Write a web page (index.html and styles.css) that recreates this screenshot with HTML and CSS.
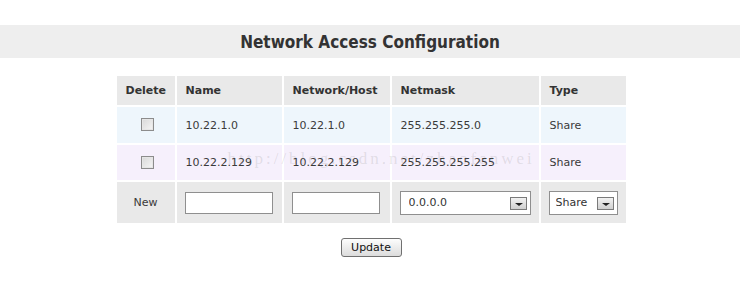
FILE: index.html
```html
<!DOCTYPE html>
<html lang="en">
<head>
    <meta charset="UTF-8">
    <title>Network Access Configuration</title>
    <link rel="stylesheet" href="styles.css">
</head>
<body>

    <h2 class="title">Network Access Configuration</h2>

    <form class="config">
        <table class="net-table">
            <tr class="head">
                <th class="col-del">Delete</th>
                <th class="col-name">Name</th>
                <th class="col-net">Network/Host</th>
                <th class="col-mask">Netmask</th>
                <th class="col-type">Type</th>
            </tr>
            <tr class="row-a">
                <td class="center"><input type="checkbox" class="check"></td>
                <td>10.22.1.0</td>
                <td>10.22.1.0</td>
                <td>255.255.255.0</td>
                <td>Share</td>
            </tr>
            <tr class="row-b">
                <td class="center"><input type="checkbox" class="check"></td>
                <td>10.22.2.129</td>
                <td>10.22.2.129</td>
                <td>255.255.255.255</td>
                <td>Share</td>
            </tr>
            <tr class="row-new">
                <td class="center">New</td>
                <td><input type="text" class="field"></td>
                <td><input type="text" class="field"></td>
                <td>
                    <div class="dropdown mask-select">
                        <select>
                            <option>0.0.0.0</option>
                            <option>255.0.0.0</option>
                            <option>255.255.0.0</option>
                            <option>255.255.255.0</option>
                            <option>255.255.255.255</option>
                        </select>
                        <span class="arrow"></span>
                    </div>
                </td>
                <td>
                    <div class="dropdown type-select">
                        <select>
                            <option>Share</option>
                            <option>Deny</option>
                        </select>
                        <span class="arrow"></span>
                    </div>
                </td>
            </tr>
        </table>

        <!-- faint watermark lying over the table -->
        <div class="watermark">http://blog.csdn.net/zhaofanwei</div>

        <div class="actions">
            <button type="button" class="update-btn">Update</button>
        </div>
    </form>

</body>
</html>
```

FILE: styles.css
```css
body {
    font-family: "DejaVu Sans", Verdana, sans-serif;
    font-size: 11px;
    color: #3a3a3a;
    background-color: #fff;
    margin: 0;
    padding-top: 25px;
}

.title {
    margin: 0;
    height: 33px;
    line-height: 34px;
    background-color: #eeeeee;
    text-align: center;
    font-family: "Liberation Sans Narrow", "DejaVu Sans Condensed", sans-serif;
    font-size: 17px;
    font-weight: bold;
    color: #333;
}

.config {
    position: relative;
    width: 513px;
    margin: 16px auto 0;
    padding-left: 2px;
}

.net-table {
    width: 513px;
    border-collapse: separate;
    border-spacing: 2px;
    table-layout: fixed;
}

.net-table th,
.net-table td {
    padding: 0 8px 0 9px;
    text-align: left;
    white-space: nowrap;
}

.net-table th {
    height: 29px;
    background-color: #e9e9e9;
    color: #333;
    font-weight: bold;
}

.col-del { width: 41px; }
.col-name { width: 88px; }
.col-net { width: 89px; }
.col-mask { width: 130px; }

.net-table td.center {
    text-align: center;
    padding: 0;
}

.row-a td {
    height: 36px;
    background-color: #eef6fc;
}

.row-b td {
    height: 35px;
    background-color: #f6f0fc;
}

.row-new td {
    height: 41px;
    padding-left: 8px;
    background-color: #e9e9e9;
}

.check {
    appearance: none;
    width: 13px;
    height: 13px;
    margin: 2px 0 0 3px;
    border: 1px solid #8c8c8c;
    background: linear-gradient(135deg, #d8d8d8, #f6f6f6);
    box-shadow: inset 0 0 0 1px #e6e6e6;
}

.field {
    width: 88px;
    height: 22px;
    margin: 0;
    padding: 0 3px;
    box-sizing: border-box;
    border: 1px solid #8f8f8f;
    background-color: #fff;
    font-family: inherit;
    font-size: 11px;
}

.dropdown {
    position: relative;
}

.dropdown select {
    appearance: none;
    display: block;
    height: 24px;
    padding: 0 0 0 8px;
    box-sizing: border-box;
    border: 1px solid #8f8f8f;
    border-radius: 0;
    background-color: #fff;
    font-family: inherit;
    font-size: 11px;
    color: #333;
}

.mask-select select { width: 131px; }
.type-select select { width: 69px; padding-left: 6px; }

.arrow {
    position: absolute;
    top: 6px;
    right: 4px;
    width: 15px;
    height: 11px;
    border: 1px solid #7a7a7a;
    background: linear-gradient(#f2f2f2, #cfcfcf);
    pointer-events: none;
}

.arrow::after {
    content: "";
    position: absolute;
    left: 4px;
    top: 5px;
    border-left: 4px solid transparent;
    border-right: 4px solid transparent;
    border-top: 3px solid #222;
}

.watermark {
    position: absolute;
    left: 115px;
    top: 75px;
    font-family: "Liberation Serif", serif;
    font-size: 17px;
    letter-spacing: 3px;
    color: rgba(120, 120, 120, 0.18);
    pointer-events: none;
}

.actions {
    text-align: center;
    padding-top: 13px;
}

.update-btn {
    width: 61px;
    height: 19px;
    padding: 0;
    border: 1px solid #707070;
    border-radius: 3px;
    background: linear-gradient(#fdfdfd, #dcdcdc);
    font-family: inherit;
    font-size: 11px;
    color: #111;
    cursor: pointer;
}
```
